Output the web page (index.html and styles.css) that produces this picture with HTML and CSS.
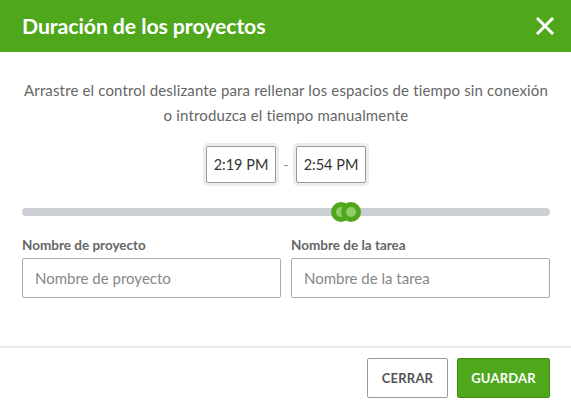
FILE: index.html
```html
<!DOCTYPE html>
<html lang="es">
<head>
<meta charset="utf-8">
<title>Duración de los proyectos</title>
<link rel="stylesheet" href="styles.css">
</head>
<body>
<div class="modal">
  <header class="modal-header">
    <h1 class="modal-title">Duración de los proyectos</h1>
    <button class="close-btn" aria-label="Cerrar">
      <svg width="18" height="18" viewBox="0 0 18 18"><path d="M2 2 L16 16 M16 2 L2 16" stroke="#fff" stroke-width="3" stroke-linecap="square"/></svg>
    </button>
  </header>
  <div class="modal-body">
    <p class="hint">Arrastre el control deslizante para rellenar los espacios de tiempo sin conexión<br>o introduzca el tiempo manualmente</p>
    <div class="times">
      <div class="time-box">2:19 PM</div>
      <span class="dash">-</span>
      <div class="time-box">2:54 PM</div>
    </div>
    <div class="slider">
      <div class="track"></div>
      <span class="thumb thumb-a"></span>
      <span class="thumb thumb-b"></span>
    </div>
    <div class="fields">
      <label class="field">
        <span class="field-label">Nombre de proyecto</span>
        <span class="input">Nombre de proyecto</span>
      </label>
      <label class="field">
        <span class="field-label">Nombre de la tarea</span>
        <span class="input">Nombre de la tarea</span>
      </label>
    </div>
  </div>
  <footer class="modal-footer">
    <button class="btn btn-secondary">CERRAR</button>
    <button class="btn btn-primary">GUARDAR</button>
  </footer>
</div>
</body>
</html>
```
FILE: styles.css
```css
* { box-sizing: border-box; }
html, body { margin: 0; padding: 0; background: #fff; }
body { font-family: "Lato", "Noto Sans", sans-serif; color: #555; }
.modal { width: 571px; height: 408px; display: flex; flex-direction: column; }
.modal-header {
  height: 52px; background: #4fa71c; display: flex; align-items: center;
  justify-content: space-between; padding: 0 16px 0 22px;
}
.modal-title { margin: 0; color: #fff; font-size: 21.3px; font-weight: 700; letter-spacing: -0.1px; }
.close-btn { background: none; border: 0; padding: 0; width: 20px; height: 20px; display: flex; align-items: center; justify-content: center; }
.modal-body { padding: 26px 21px 0 22px; flex: 1; }
.hint { margin: 0; text-align: center; font-size: 15px; line-height: 25px; color: #666; letter-spacing: 0.15px; }
.times { display: flex; justify-content: center; align-items: center; gap: 0; margin-top: 18px; }
.time-box {
  width: 70px; height: 37px; border: 1px solid #999; border-radius: 2px;
  box-shadow: 0 0 0 3px #ececec; display: flex; align-items: center; justify-content: center;
  font-size: 14.5px; color: #333;
}
.dash { width: 20px; text-align: center; color: #888; font-size: 14px; }
.slider { position: relative; height: 20px; margin-top: 19px; }
.track { position: absolute; left: 0; right: 0; top: 6px; height: 8px; border-radius: 4px; background: #ccd0d4; }
.thumb {
  position: absolute; top: 0; width: 20px; height: 20px; border-radius: 50%;
  background: #4fa71c; display: block;
}
.thumb::after {
  content: ""; position: absolute; left: 5px; top: 5px; width: 10px; height: 10px; border-radius: 50%; background: #8fcd6a;
}
.thumb-a { left: 309px; }
.thumb-b { left: 319px; }
.fields { display: flex; gap: 10px; margin-top: 15px; }
.field { flex: 1; display: flex; flex-direction: column; }
.field-label { font-size: 13.5px; font-weight: 700; color: #666; line-height: 16px; }
.input {
  margin-top: 5px; height: 40px; border: 1px solid #aaa; border-radius: 2px;
  display: flex; align-items: center; padding: 0 12px; font-size: 15px; color: #888;
}
.modal-footer {
  border-top: 2px solid #eaeaea; height: 62px; display: flex; justify-content: flex-end;
  align-items: center; gap: 9px; padding: 0 21px 0 0;
}
.btn { height: 40px; border-radius: 2px; font-family: inherit; font-size: 13px; font-weight: 700; letter-spacing: 0.2px; }
.btn-secondary { width: 81px; background: #fff; border: 1px solid #999; color: #555; }
.btn-primary { width: 93px; background: #4fa71c; border: 1px solid #3f8f12; color: #fff; }
```
